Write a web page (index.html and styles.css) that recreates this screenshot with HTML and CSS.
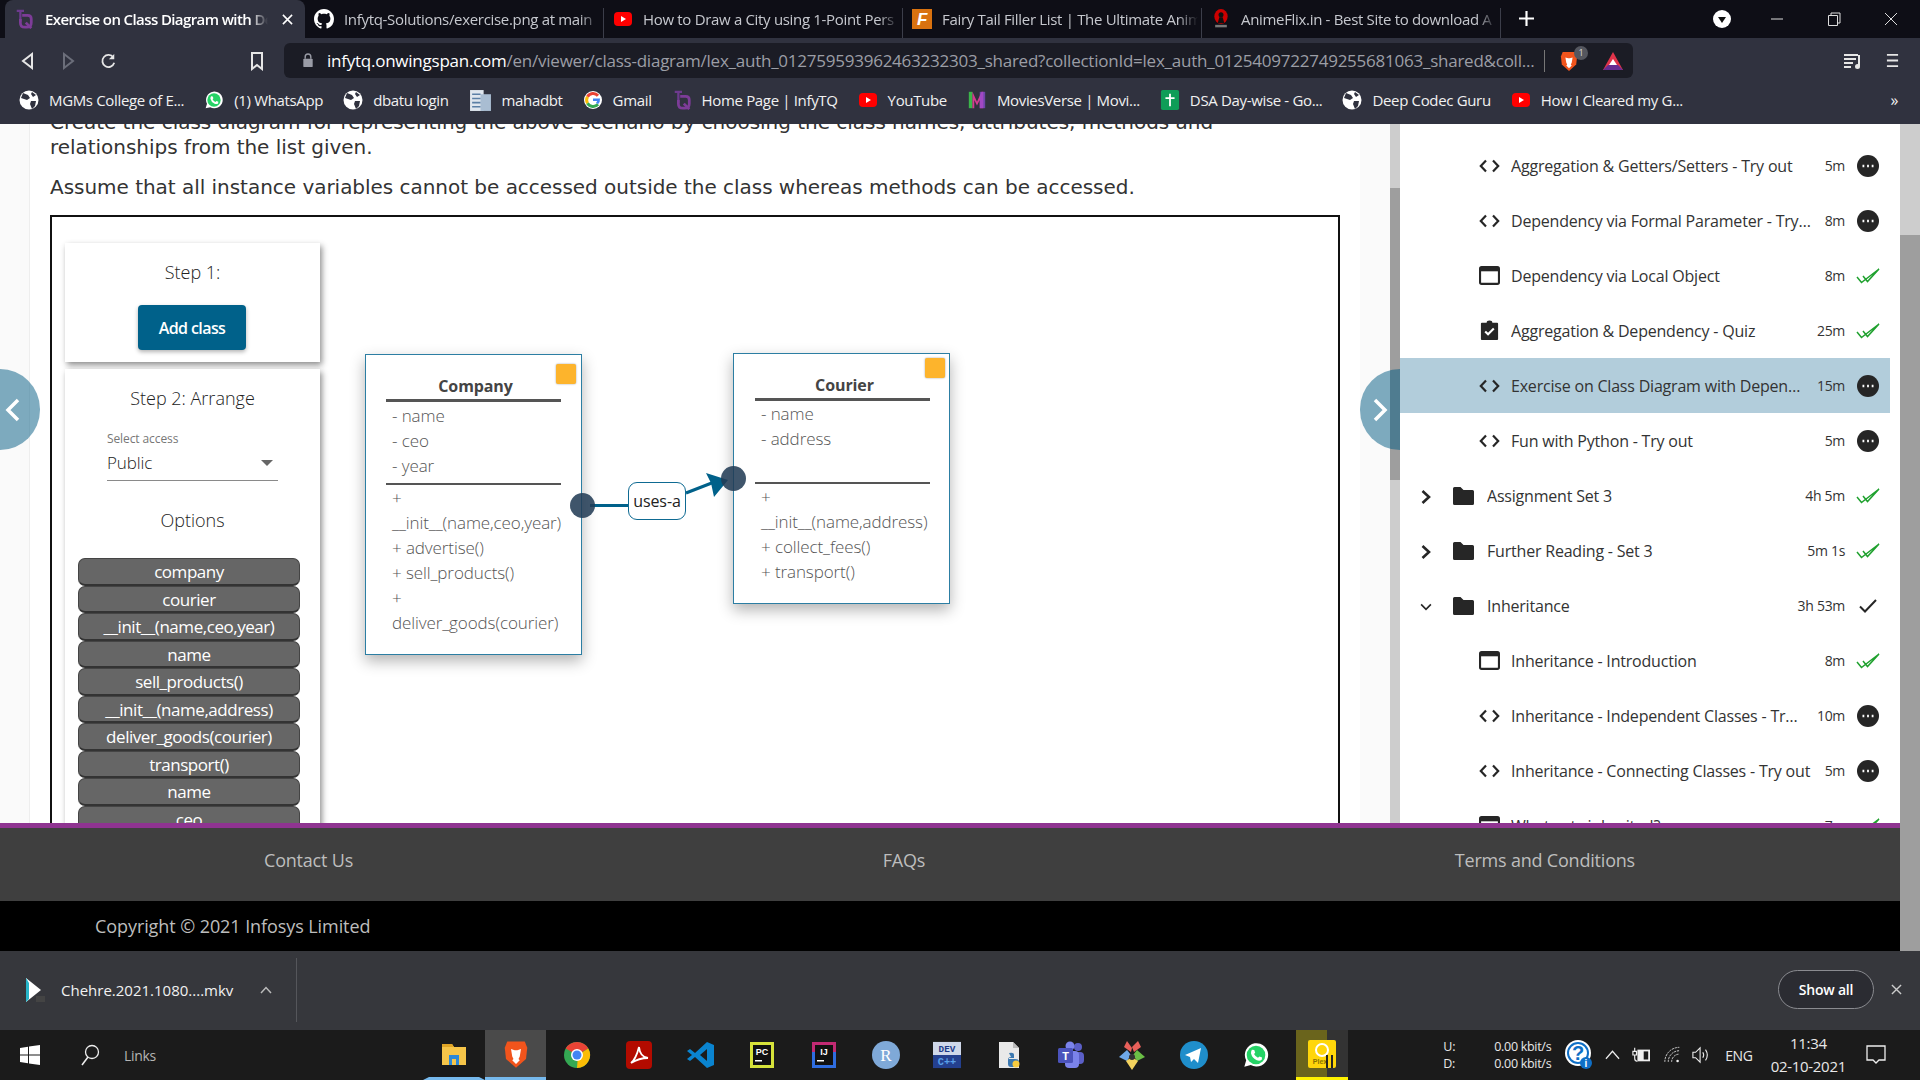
FILE: index.html
```html
<!DOCTYPE html>
<html lang="en">
<head>
  <meta charset="UTF-8" />
  <title>Exercise on Class Diagram with Dependency</title>
  <link rel="stylesheet" href="styles.css">
</head>
<body>
  <svg class="defs">
    <symbol id="yt" viewBox="0 0 20 20"><rect x="1" y="3" width="18" height="14" rx="4" fill="#f00"/><path d="M8 7l5 3-5 3z" fill="#fff"/></symbol>
    <symbol id="tq" viewBox="0 0 20 22"><path d="M2 2h8M6 2v12" fill="none" stroke="#6d3a8e" stroke-width="2.500"/><path d="M8 7h6q4 0 4 4v4q0 5-5 5h-2q-5 0-5-5v-4" fill="none" stroke="#7d3c98" stroke-width="3"/><path d="M12 15l6 6" stroke="#7d3c98" stroke-width="3"/></symbol>
    <symbol id="github" viewBox="0 0 16 16"><path fill="#fff" d="M8 0C3.58 0 0 3.58 0 8c0 3.54 2.29 6.53 5.47 7.59.4.07.55-.17.55-.38 0-.19-.01-.82-.01-1.49-2.01.37-2.53-.49-2.69-.94-.09-.23-.48-.94-.82-1.13-.28-.15-.68-.52-.01-.53.63-.01 1.08.58 1.23.82.72 1.21 1.87.87 2.33.66.07-.52.28-.87.51-1.07-1.78-.2-3.64-.89-3.64-3.95 0-.87.31-1.59.82-2.15-.08-.2-.36-1.02.08-2.12 0 0 .67-.21 2.2.82.64-.18 1.32-.27 2-.27.68 0 1.36.09 2 .27 1.53-1.04 2.2-.82 2.2-.82.44 1.1.16 1.92.08 2.12.51.56.82 1.27.82 2.15 0 3.07-1.87 3.75-3.65 3.95.29.25.54.73.54 1.48 0 1.07-.01 1.93-.01 2.2 0 .21.15.46.55.38A8.013 8.013 0 0016 8c0-4.42-3.58-8-8-8z"/></symbol>
    <symbol id="fairy" viewBox="0 0 20 20"><rect width="20" height="20" fill="#d9720f"/><text x="10" y="16" text-anchor="middle" font-family="Liberation Sans" font-weight="700" font-style="italic" font-size="17" fill="#fff">F</text></symbol>
    <symbol id="anime" viewBox="0 0 20 24"><ellipse cx="10" cy="9" rx="8" ry="9" fill="#c00"/><circle cx="10" cy="7" r="3" fill="#111"/><path d="M6 17l2-7h4l2 7z" fill="#111"/><rect x="3" y="19" width="14" height="3" fill="#777"/></symbol>
    <symbol id="globe" viewBox="0 0 20 20"><circle cx="10" cy="10" r="9.500" fill="#fff"/><path d="M4 3l5 2 2 3-3 2-3-1-3-1zM12 11l5 0-1 5-3 3-2-5zM13 2l4 3-3 2-2-3z" fill="#30323f"/></symbol>
    <symbol id="wa" viewBox="0 0 24 24"><path d="M2 22l1.600-5.400A10 10 0 1 1 7.500 20.600z" fill="#fff"/><circle cx="12" cy="12" r="8" fill="#25d366"/><path d="M8.500 7.500l2 .2.8 2.300-1 1.200q1.200 2.300 3.400 3.200l1.300-1.200 2.200 1-.3 1.900q-1.800 1.400-4.200.4-4-1.700-5-6 0-2 .8-3z" fill="#fff"/></symbol>
    <symbol id="doc" viewBox="0 0 22 22"><rect x="1" y="1" width="13" height="20" fill="#dfe6ee"/><rect x="11" y="5" width="10" height="16" fill="#a9bdd2"/><path d="M3 5h8M3 9h8M3 13h8M3 17h8" stroke="#5b7fa5" stroke-width="1.500"/></symbol>
    <symbol id="google" viewBox="0 0 20 20"><circle cx="10" cy="10" r="9" fill="#fff"/><path d="M4.500 6.800A6.500 6.500 0 0 1 15 5.800" fill="none" stroke="#ea4335" stroke-width="3"/><path d="M4.500 6.800a6.500 6.500 0 0 0 0 6.400" fill="none" stroke="#fbbc05" stroke-width="3"/><path d="M4.500 13.200A6.500 6.500 0 0 0 15 14.200" fill="none" stroke="#34a853" stroke-width="3"/><path d="M10 8.500h7q.4 3.500-2 5.700l-2-1.700q1-.8 1.200-1.500H10z" fill="#4285f4"/></symbol>
    <symbol id="movies" viewBox="0 0 22 22"><path d="M2 20V2h4v18z" fill="#3bb54a"/><path d="M6 2l5 11 5-11h2v18h-4V11l-3 6-3-6v9H6z" fill="#d63a8f"/><path d="M14 2h6v18h-6z" fill="#8a4ed8" opacity=".7"/></symbol>
    <symbol id="sheet" viewBox="0 0 20 22"><rect width="20" height="22" rx="2" fill="#0f9d58"/><path d="M9 4h2v14H9zM5 8h10v2H5z" fill="#fff"/></symbol>
    <symbol id="brave" viewBox="0 0 20 24"><path d="M3 2h14l2 5-1 9-8 7-8-7-1-9z" fill="#f1541c"/><path d="M6 8l3 1h2l3-1-1 6-1 2 1 1-3 3-3-3 1-1-1-2z" fill="#fff"/></symbol>
    <symbol id="code" viewBox="0 0 21 14"><path d="M7 1.500L1.800 7 7 12.500M14 1.500L19.200 7 14 12.500" fill="none" stroke="#262626" stroke-width="2.200"/></symbol>
    <symbol id="window" viewBox="0 0 20 20"><rect x="1" y="2" width="18" height="16" rx="1.500" fill="none" stroke="#262626" stroke-width="2"/><rect x="1" y="2" width="18" height="4" fill="#262626"/></symbol>
    <symbol id="quiz" viewBox="0 0 20 22"><path d="M2 3h5q0-2.500 3-2.500T13 3h5q1 0 1 1v16q0 1-1 1H2q-1 0-1-1V4q0-1 1-1z" fill="#262626"/><path d="M5.500 12l3 3 6-6" fill="none" stroke="#fff" stroke-width="2.200"/></symbol>
    <symbol id="folder" viewBox="0 0 21 18"><path d="M1.500 0h6l3 3h9q1.500 0 1.500 1.500v12q0 1.500-1.500 1.500h-18Q0 18 0 16.500v-15Q0 0 1.500 0z" fill="#262626"/></symbol>
    <symbol id="dots" viewBox="0 0 22 22"><circle cx="11" cy="11" r="11" fill="#262626"/><path d="M5.500 11h1.800M10.100 11h1.800M14.700 11h1.800" stroke="#fff" stroke-width="2.600"/></symbol>
    <symbol id="done" viewBox="0 0 24 16"><path d="M1 9l4.500 5.500L23 1M7 8l4.500 5.500L23 1" fill="none" stroke="#1fa12e" stroke-width="1.500"/></symbol>
    <symbol id="check" viewBox="0 0 18 14"><path d="M1 7.500l5 5L17 1" fill="none" stroke="#262626" stroke-width="2"/></symbol>
    <symbol id="chev-r" viewBox="0 0 12 16"><path d="M2.500 2l6.500 6-6.500 6" fill="none" stroke="#262626" stroke-width="2.600"/></symbol>
    <symbol id="chev-d" viewBox="0 0 16 12"><path d="M1.500 2.500l6.500 6.500 6.500-6.500" fill="none" stroke="#262626" stroke-width="2.200"/></symbol>
  </svg>

  <div class="tabstrip">
    <div class="tab tab-active"><svg class="fav"><use href="#tq"/></svg><span class="tab-title">Exercise on Class Diagram with De</span><svg class="tab-x" viewBox="0 0 12 12"><path d="M1 1l10 10M11 1L1 11" stroke="#fff" stroke-width="1.700"/></svg></div>
    <div class="tab"><svg class="fav"><use href="#github"/></svg><span class="tab-title">Infytq-Solutions/exercise.png at main</span></div>
    <div class="tab"><svg class="fav"><use href="#yt"/></svg><span class="tab-title">How to Draw a City using 1-Point Pers</span></div>
    <div class="tab"><svg class="fav"><use href="#fairy"/></svg><span class="tab-title">Fairy Tail Filler List | The Ultimate Anim</span></div>
    <div class="tab"><svg class="fav"><use href="#anime"/></svg><span class="tab-title">AnimeFlix.in - Best Site to download A</span></div>
    <svg class="tab-plus" viewBox="0 0 14 14"><path d="M7 0v14M0 7h14" stroke="#fff" stroke-width="2"/></svg>
    <div class="win-ctrls">
      <svg class="win-profile" viewBox="0 0 18 18"><circle cx="9" cy="9" r="9" fill="#fff"/><path d="M5 7h8l-4 6z" fill="#111"/></svg>
      <svg class="win-btn" viewBox="0 0 14 14"><path d="M1 7h12" stroke="#ddd"/></svg>
      <svg class="win-btn" viewBox="0 0 14 14"><path d="M1.500 3.500h9v10h-9zM4 3.500V1h9v10h-2.500" fill="none" stroke="#ddd"/></svg>
      <svg class="win-btn" viewBox="0 0 14 14"><path d="M1 1l12 12M13 1L1 13" stroke="#ddd"/></svg>
    </div>
  </div>

  <div class="toolbar">
    <svg class="nav-btn" viewBox="0 0 16 20"><path d="M12 3v14L3 10z" fill="none" stroke="#e6e6e6" stroke-width="2"/></svg>
    <svg class="nav-btn" viewBox="0 0 16 20"><path d="M4 3v14l9-7z" fill="none" stroke="#6b6e7a" stroke-width="2"/></svg>
    <svg class="nav-btn" viewBox="0 0 18 20"><path d="M15 6a6.800 6.800 0 1 0 1 6" fill="none" stroke="#e6e6e6" stroke-width="2"/><path d="M16 2v6h-6z" fill="#e6e6e6"/></svg>
    <svg class="nav-mark" viewBox="0 0 14 20"><path d="M2 2h10v16l-5-4-5 4z" fill="none" stroke="#e6e6e6" stroke-width="2"/></svg>
    <div class="omnibox">
      <svg class="lock" viewBox="0 0 12 16"><rect x="1" y="6" width="10" height="9" rx="1" fill="#9a9ca6"/><path d="M3 6V4q0-3 3-3t3 3v2" fill="none" stroke="#9a9ca6" stroke-width="1.500"/></svg>
      <div class="url"><span class="url-host">infytq.onwingspan.com</span>/en/viewer/class-diagram/lex_auth_012759593962463232303_shared?collectionId=lex_auth_0125409722749255681063_shared&amp;coll...</div>
      <span class="omni-sep"></span>
      <span class="shield"><svg class="shield-icon"><use href="#brave"/></svg><span class="shield-badge">1</span></span>
      <svg class="bat" viewBox="0 0 22 20"><path d="M11 1l10 18H1z" fill="#e0344a"/><path d="M1 19l5-5h10l5 5z" fill="#662d91"/><path d="M11 8l4 6H7z" fill="#fff"/></svg>
    </div>
    <svg class="tool-queue" viewBox="0 0 20 18"><path d="M1 3h14M1 7h12M1 11h9M1 15h7" stroke="#e6e6e6" stroke-width="2"/><path d="M16 3v11" stroke="#e6e6e6" stroke-width="2"/><circle cx="14.500" cy="14.500" r="2.500" fill="#e6e6e6"/></svg>
    <svg class="tool-menu" viewBox="0 0 14 16"><path d="M1 2h12M1 8h12M1 14h12" stroke="#e6e6e6" stroke-width="2"/></svg>
  </div>

  <div class="bookmarks">
    <a class="mark"><svg><use href="#globe"/></svg>MGMs College of E...</a>
    <a class="mark"><svg><use href="#wa"/></svg>(1) WhatsApp</a>
    <a class="mark"><svg><use href="#globe"/></svg>dbatu login</a>
    <a class="mark mark-doc"><svg><use href="#doc"/></svg>mahadbt</a>
    <a class="mark"><svg><use href="#google"/></svg>Gmail</a>
    <a class="mark"><svg><use href="#tq"/></svg>Home Page | InfyTQ</a>
    <a class="mark"><svg><use href="#yt"/></svg>YouTube</a>
    <a class="mark"><svg><use href="#movies"/></svg>MoviesVerse | Movi...</a>
    <a class="mark"><svg><use href="#sheet"/></svg>DSA Day-wise - Go...</a>
    <a class="mark"><svg><use href="#globe"/></svg>Deep Codec Guru</a>
    <a class="mark"><svg><use href="#yt"/></svg>How I Cleared my G...</a>
    <span class="mark-more">»</span>
  </div>

  <div class="page">
    <div class="page-main">
      <div class="viewer">
        <div class="gutter"></div>
        <div class="article">
          <p class="lead">Create the class diagram for representing the above scenario by choosing the class names, attributes, methods and relationships from the list given.</p>
          <p class="lead lead-2">Assume that all instance variables cannot be accessed outside the class whereas methods can be accessed.</p>
          <div class="diagram">
            <div class="panel panel-step1">
              <div class="panel-title">Step 1:</div>
              <button class="add-btn">Add class</button>
            </div>
            <div class="panel panel-step2">
              <div class="panel-title">Step 2: Arrange</div>
              <div class="select-label">Select access</div>
              <div class="select-box">Public<span class="select-caret"></span></div>
              <div class="panel-title options-title">Options</div>
              <div class="option">company</div>
              <div class="option">courier</div>
              <div class="option">__init__(name,ceo,year)</div>
              <div class="option">name</div>
              <div class="option">sell_products()</div>
              <div class="option">__init__(name,address)</div>
              <div class="option">deliver_goods(courier)</div>
              <div class="option">transport()</div>
              <div class="option">name</div>
              <div class="option">ceo</div>
            </div>

            <div class="uml uml-company">
              <span class="uml-flag"></span>
              <div class="uml-name">Company</div>
              <div class="uml-attrs"><div>- name</div><div>- ceo</div><div>- year</div></div>
              <div class="uml-methods"><div>+ __init__(name,ceo,year)</div><div>+ advertise()</div><div>+ sell_products()</div><div>+ deliver_goods(courier)</div></div>
            </div>
            <div class="uml uml-courier">
              <span class="uml-flag"></span>
              <div class="uml-name">Courier</div>
              <div class="uml-attrs"><div>- name</div><div>- address</div></div>
              <div class="uml-methods"><div>+ __init__(name,address)</div><div>+ collect_fees()</div><div>+ transport()</div></div>
            </div>

            <svg class="links" viewBox="0 0 1288 700">
              <path d="M538 288.500h38M634 276l27-10.500" fill="none" stroke="#00618a" stroke-width="3"/>
              <path d="M654 256l22 7-14 17-3-14z" fill="#00618a"/>
              <ellipse cx="530.500" cy="288.500" rx="12.500" ry="12.500" fill="#233c55" opacity=".87"/>
              <ellipse cx="681.500" cy="261.500" rx="12.500" ry="12.500" fill="#233c55" opacity=".87"/>
            </svg>
            <div class="link-label">uses-a</div>
          </div>
        </div>
        <div class="gutter-right"></div>
        <div class="sidebar-scroll"><span class="sidebar-thumb"></span></div>
        <div class="sidebar">
          <div class="row"><svg class="row-icon row-code"><use href="#code"/></svg><span class="row-title">Aggregation &amp; Getters/Setters - Try out</span><span class="row-time">5m</span><svg class="row-status"><use href="#dots"/></svg></div>
          <div class="row"><svg class="row-icon row-code"><use href="#code"/></svg><span class="row-title">Dependency via Formal Parameter - Try out</span><span class="row-time">8m</span><svg class="row-status"><use href="#dots"/></svg></div>
          <div class="row"><svg class="row-icon"><use href="#window"/></svg><span class="row-title">Dependency via Local Object</span><span class="row-time">8m</span><svg class="row-status row-done"><use href="#done"/></svg></div>
          <div class="row"><svg class="row-icon"><use href="#quiz"/></svg><span class="row-title">Aggregation &amp; Dependency - Quiz</span><span class="row-time">25m</span><svg class="row-status row-done"><use href="#done"/></svg></div>
          <div class="row row-active"><svg class="row-icon row-code"><use href="#code"/></svg><span class="row-title">Exercise on Class Diagram with Dependency</span><span class="row-time">15m</span><svg class="row-status"><use href="#dots"/></svg></div>
          <div class="row"><svg class="row-icon row-code"><use href="#code"/></svg><span class="row-title">Fun with Python - Try out</span><span class="row-time">5m</span><svg class="row-status"><use href="#dots"/></svg></div>
          <div class="row row-folder"><svg class="row-chev"><use href="#chev-r"/></svg><svg class="row-icon"><use href="#folder"/></svg><span class="row-title">Assignment Set 3</span><span class="row-time">4h 5m</span><svg class="row-status row-done"><use href="#done"/></svg></div>
          <div class="row row-folder"><svg class="row-chev"><use href="#chev-r"/></svg><svg class="row-icon"><use href="#folder"/></svg><span class="row-title">Further Reading - Set 3</span><span class="row-time">5m 1s</span><svg class="row-status row-done"><use href="#done"/></svg></div>
          <div class="row row-folder"><svg class="row-chev"><use href="#chev-d"/></svg><svg class="row-icon"><use href="#folder"/></svg><span class="row-title">Inheritance</span><span class="row-time">3h 53m</span><svg class="row-status row-check"><use href="#check"/></svg></div>
          <div class="row"><svg class="row-icon"><use href="#window"/></svg><span class="row-title">Inheritance - Introduction</span><span class="row-time">8m</span><svg class="row-status row-done"><use href="#done"/></svg></div>
          <div class="row"><svg class="row-icon row-code"><use href="#code"/></svg><span class="row-title">Inheritance - Independent Classes - Try out</span><span class="row-time">10m</span><svg class="row-status"><use href="#dots"/></svg></div>
          <div class="row"><svg class="row-icon row-code"><use href="#code"/></svg><span class="row-title">Inheritance - Connecting Classes - Try out</span><span class="row-time">5m</span><svg class="row-status"><use href="#dots"/></svg></div>
          <div class="row"><svg class="row-icon"><use href="#window"/></svg><span class="row-title">What gets inherited?</span><span class="row-time">7m</span><svg class="row-status row-done"><use href="#done"/></svg></div>
        </div>
        <div class="flip flip-left"><svg viewBox="0 0 16 24"><path d="M13 2L3 12l10 10" fill="none" stroke="#fff" stroke-width="3.500"/></svg></div>
        <div class="flip flip-right"><svg viewBox="0 0 16 24"><path d="M3 2l10 10L3 22" fill="none" stroke="#fff" stroke-width="3.500"/></svg></div>
      </div>
      <div class="foot-links"><a>Contact Us</a><a>FAQs</a><a>Terms and Conditions</a></div>
      <div class="foot-copy">Copyright © 2021 Infosys Limited</div>
    </div>
    <div class="page-scroll"></div>
  </div>

  <div class="downloads">
    <svg class="dl-icon" viewBox="0 0 20 26"><path d="M1 1l15 12L1 25z" fill="#fff"/><path d="M1 1v24l3-3V6z" fill="#27b5c9"/><rect x="11" y="19" width="9" height="6" fill="#444"/></svg>
    <span class="dl-name">Chehre.2021.1080....mkv</span>
    <svg class="dl-caret" viewBox="0 0 12 8"><path d="M1 7l5-5.500L11 7" fill="none" stroke="#bbb" stroke-width="1.500"/></svg>
    <span class="dl-sep"></span>
    <button class="dl-all">Show all</button>
    <svg class="dl-close" viewBox="0 0 12 12"><path d="M1 1l10 10M11 1L1 11" stroke="#ccc" stroke-width="1.500"/></svg>
  </div>

  <div class="taskbar">
    <svg class="start" viewBox="0 0 20 20"><path d="M0 3l8-1.200V9.500H0zM9 1.600L20 0v9.500H9zM0 10.500h8v7.700L0 17zM9 10.500h11V20L9 18.400z" fill="#fff"/></svg>
    <svg class="search" viewBox="0 0 20 22"><circle cx="12" cy="8" r="6.500" fill="none" stroke="#eee" stroke-width="1.300"/><path d="M8 13l-6 8" stroke="#eee" stroke-width="1.500"/></svg>
    <span class="search-text">Links</span>
    <div class="apps">
      <div class="app app-open"><svg viewBox="0 0 28 28"><path d="M2 4h10l2 3h12v18H2z" fill="#f6c549"/><path d="M2 4h10l2 3H2z" fill="#e0a526"/><rect x="9" y="15" width="10" height="10" fill="#2b88d8"/><rect x="12" y="19" width="4" height="6" fill="#f6c549"/></svg></div>
      <div class="app app-active"><svg><use href="#brave"/></svg></div>
      <div class="app"><svg viewBox="0 0 28 28"><circle cx="14" cy="14" r="13" fill="#34a853"/><path d="M14 1a13 13 0 0 1 11.300 6.500L14 14 2.700 7.500A13 13 0 0 1 14 1z" fill="#ea4335"/><path d="M25.300 7.500A13 13 0 0 1 14 27l1-13z" fill="#fbbc05"/><circle cx="14" cy="14" r="6" fill="#fff"/><circle cx="14" cy="14" r="4.500" fill="#4285f4"/></svg></div>
      <div class="app"><svg viewBox="0 0 28 28"><rect x="1" y="0" width="26" height="28" rx="4" fill="#b30b00"/><path d="M6 22q5-4 8-16 1 10 9 11-9 0-17 5z" fill="none" stroke="#fff" stroke-width="1.800"/></svg></div>
      <div class="app"><svg viewBox="0 0 28 28"><path d="M20 1l7 3v20l-7 3L8 16l-5 4-3-2 5-4-5-4 3-2 5 4z" fill="#0a84d0"/><path d="M20 8l-7 6 7 6z" fill="#1c1c1c"/></svg></div>
      <div class="app"><svg viewBox="0 0 28 28"><rect x="2" y="1" width="24" height="26" fill="#d6e23a"/><rect x="5" y="4" width="18" height="20" fill="#111"/><text x="14" y="14" text-anchor="middle" font-family="Liberation Sans" font-weight="700" font-size="9" fill="#fff">PC</text><rect x="7" y="19" width="7" height="1.500" fill="#fff"/></svg></div>
      <div class="app"><svg viewBox="0 0 28 28"><rect x="2" y="1" width="24" height="26" fill="#2f6de0"/><rect x="2" y="1" width="24" height="10" fill="#c22a73"/><rect x="5" y="4" width="18" height="20" fill="#111"/><text x="14" y="14" text-anchor="middle" font-family="Liberation Sans" font-weight="700" font-size="9" fill="#fff">IJ</text><rect x="7" y="19" width="7" height="1.500" fill="#fff"/></svg></div>
      <div class="app"><svg viewBox="0 0 28 28"><circle cx="14" cy="14" r="14" fill="#7fa9d8"/><text x="14" y="20" text-anchor="middle" font-family="Liberation Serif" font-size="17" fill="#fff">R</text></svg></div>
      <div class="app"><svg viewBox="0 0 30 28"><rect width="30" height="14" fill="#cfd8ea"/><rect y="14" width="30" height="14" fill="#24408f"/><text x="15" y="11" text-anchor="middle" font-family="Liberation Mono" font-weight="700" font-size="10" fill="#1c3a88">DEV</text><text x="15" y="25" text-anchor="middle" font-family="Liberation Mono" font-weight="700" font-size="11" fill="#5aa0e8">C++</text></svg></div>
      <div class="app"><svg viewBox="0 0 28 28"><path d="M4 1h14l6 6v20H4z" fill="#e9e9e9"/><path d="M18 1v6h6" fill="#bbb"/><path d="M14 12q5-1 5 2v3h-5v1h6q4 0 4 3t-4 5h-4q-3 0-3-3v-4q0-3 3-3z" fill="#3b78b0"/><circle cx="21" cy="23" r="3.500" fill="#f7cb3f"/></svg></div>
      <div class="app"><svg viewBox="0 0 28 28"><circle cx="21" cy="6" r="4" fill="#5b5fc7"/><rect x="14" y="11" width="13" height="12" rx="4" fill="#5b5fc7"/><circle cx="13" cy="5" r="4.500" fill="#7b83eb"/><rect x="8" y="10" width="14" height="17" rx="4" fill="#7b83eb"/><rect x="1" y="7" width="15" height="15" rx="1.500" fill="#4b53bc"/><text x="8.500" y="19" text-anchor="middle" font-family="Liberation Sans" font-weight="700" font-size="11" fill="#fff">T</text></svg></div>
      <div class="app"><svg viewBox="0 0 28 30"><path d="M14 7l6-6 3 6-7 5z" fill="#e8605a"/><path d="M14 8L9 1 6 7l7 5z" fill="#e8605a"/><path d="M9 10L1 17l8 4 4-6z" fill="#6fa8e8"/><path d="M19 10l8 7-8 4-4-6z" fill="#6bbf46"/><path d="M8 21l6 9 6-9-6-4z" fill="#f4d35e"/><circle cx="14" cy="17" r="3" fill="#333"/></svg></div>
      <div class="app"><svg viewBox="0 0 28 28"><circle cx="14" cy="14" r="14" fill="#1f8ecb"/><path d="M5 14l16-7-3 15-4-4-3 3-1-5z" fill="#fff"/></svg></div>
      <div class="app"><svg><use href="#wa"/></svg></div>
      <div class="app app-plex"><svg viewBox="0 0 28 30"><rect y="1" width="28" height="28" rx="2" fill="#ffd60a"/><circle cx="14" cy="11" r="6" fill="none" stroke="#fff" stroke-width="2"/><text x="12" y="25" text-anchor="middle" font-family="Liberation Sans" font-weight="700" font-size="7" fill="#8a7400">Plex</text><path d="M19 16v13M24 16v13" stroke="#222" stroke-width="2"/></svg></div>
    </div>
    <div class="tray">
      <div class="net"><div class="net-row"><span>U:</span><span>0.00 kbit/s</span></div><div class="net-row"><span>D:</span><span>0.00 kbit/s</span></div></div>
      <svg class="tray-help" viewBox="0 0 28 32"><circle cx="14" cy="14" r="13" fill="#fff"/><circle cx="14" cy="14" r="10" fill="none" stroke="#0f6fc6" stroke-width="2"/><text x="14" y="21" text-anchor="middle" font-family="Liberation Sans" font-weight="700" font-size="20" fill="#0f6fc6">?</text><circle cx="22" cy="24" r="6" fill="#0f6fc6"/><text x="22" y="28" text-anchor="middle" font-family="Liberation Sans" font-weight="700" font-size="10" fill="#fff">i</text></svg>
      <svg class="tray-caret" viewBox="0 0 16 10"><path d="M1 9l7-8 7 8" fill="none" stroke="#eee" stroke-width="1.300"/></svg>
      <svg class="tray-power" viewBox="0 0 22 20"><path d="M4 2v4M2 6h4v4H2zM4 10v4q0 3 3 3" fill="none" stroke="#eee" stroke-width="1.300"/><rect x="7" y="4" width="14" height="13" fill="#eee"/><rect x="14" y="6" width="5" height="9" fill="#1b1b1b"/></svg>
      <svg class="tray-wifi" viewBox="0 0 20 20"><path d="M1 18A17 17 0 0 1 18 1M5 18A13 13 0 0 1 18 5M9 18a9 9 0 0 1 9-9" fill="none" stroke="#eee" stroke-width="1" stroke-dasharray="2.500 1"/><circle cx="16" cy="17" r="1.500" fill="#eee"/></svg>
      <svg class="tray-sound" viewBox="0 0 22 20"><path d="M2 7h3l5-5v16l-5-5H2z" fill="none" stroke="#eee" stroke-width="1.200"/><path d="M13 7q2 3 0 6M16 4q4 6 0 12" fill="none" stroke="#eee" stroke-width="1.200"/></svg>
      <span class="tray-lang">ENG</span>
      <div class="clock"><div>11:34</div><div>02-10-2021</div></div>
      <svg class="tray-note" viewBox="0 0 20 20"><path d="M1 1h18v14h-6l-3 3-3-3H1z" fill="none" stroke="#eee" stroke-width="1.300"/></svg>
    </div>
  </div>
</body>
</html>
```

FILE: styles.css
```css
* {
  box-sizing: border-box;
}

body {
  margin: 0;
  width: 1920px;
  height: 1080px;
  overflow: hidden;
  display: flex;
  flex-direction: column;
  font-family: "Open Sans", sans-serif;
  background: #fff;
}

.defs {
  display: none;
}

/* browser chrome */
.tabstrip {
  height: 38px;
  display: flex;
  align-items: stretch;
  padding-left: 5px;
  background: #0e0e16;
  color: #c6c8ce;
  font-size: 15px;
  letter-spacing: -0.32px;
}

.tab {
  width: 299px;
  display: flex;
  align-items: center;
  gap: 10px;
  margin-top: 8px;
  padding: 0 3px 8px 9px;
  border-right: 1px solid #3c3e4a;
}

.tab-active {
  width: 300px;
  margin: 0;
  padding-bottom: 0;
  background: #30323f;
  color: #fff;
  font-weight: 600;
  letter-spacing: -0.6px;
  gap: 11px;
  border-right: 0;
  border-radius: 8px 8px 0 0;
}

.fav {
  width: 20px;
  height: 20px;
  flex: none;
}

.tab-title {
  flex: 1;
  overflow: hidden;
  white-space: nowrap;
  -webkit-mask-image: linear-gradient(to right, #000 92%, transparent);
  mask-image: linear-gradient(to right, #000 92%, transparent);
}

.tab-x {
  width: 11px;
  height: 11px;
  flex: none;
  margin: 0 9px 0 3px;
}

.tab-plus {
  width: 15px;
  height: 15px;
  margin: 11px 0 0 18px;
}

.win-ctrls {
  margin-left: auto;
  display: flex;
  align-items: center;
}

.win-profile {
  width: 18px;
  height: 18px;
  margin-right: 39px;
}

.win-btn {
  width: 14px;
  height: 14px;
  margin-right: 43px;
}

.win-btn:last-child {
  margin-right: 22px;
}

.toolbar {
  height: 46px;
  display: flex;
  align-items: center;
  padding: 0 0 1px 20px;
  background: #30323f;
}

.nav-btn {
  width: 16px;
  height: 20px;
  margin-right: 24px;
}

.nav-mark {
  width: 14px;
  height: 20px;
  margin: 0 20px 0 110px;
}

.omnibox {
  width: 1349px;
  height: 35px;
  display: flex;
  align-items: center;
  padding-left: 18px;
  background: #1b1c25;
  border-radius: 6px;
  font-size: 17px;
  letter-spacing: -0.24px;
  color: #9c9ea6;
}

.lock {
  width: 12px;
  height: 15px;
  flex: none;
  margin-right: 13px;
}

.url {
  width: 1209px;
  flex: none;
  white-space: nowrap;
  overflow: hidden;
}

.url-host {
  color: #fff;
}

.omni-sep {
  width: 1px;
  height: 22px;
  margin: 0 15px 0 8px;
  background: #777;
}

.shield {
  position: relative;
  width: 18px;
  height: 24px;
}

.shield-icon {
  width: 18px;
  height: 24px;
}

.shield-badge {
  position: absolute;
  left: 14px;
  top: -3px;
  width: 14px;
  height: 14px;
  border-radius: 50%;
  background: #55575f;
  color: #ddd;
  font-size: 9px;
  letter-spacing: 0;
  line-height: 14px;
  text-align: center;
}

.bat {
  width: 22px;
  height: 20px;
  margin-left: 24px;
}

.tool-queue {
  width: 20px;
  height: 18px;
  margin-left: 210px;
}

.tool-menu {
  width: 13px;
  height: 15px;
  margin-left: 23px;
}

.bookmarks {
  height: 40px;
  display: flex;
  align-items: center;
  gap: 20px;
  padding: 0 0 8px 19px;
  background: #30323f;
  color: #f1f1f1;
  font-size: 15px;
  letter-spacing: -0.34px;
}

.mark {
  display: flex;
  align-items: center;
  gap: 10px;
  white-space: nowrap;
}

.mark svg {
  width: 20px;
  height: 20px;
  flex: none;
}

.mark-doc svg {
  width: 23px;
  height: 23px;
}

.mark-more {
  margin-left: auto;
  margin-right: 22px;
  font-size: 16px;
}

/* page */
.page {
  flex: 1;
  min-height: 0;
  display: flex;
}

.page-main {
  width: 1900px;
  display: flex;
  flex-direction: column;
}

.page-scroll {
  width: 20px;
  background: linear-gradient(#cdcdcd 111px, #9e9e9e 111px);
}

.viewer {
  position: relative;
  height: 704px;
  display: flex;
  overflow: hidden;
  border-bottom: 5px solid #8f3491;
}

.gutter {
  width: 30px;
  flex: none;
  background: #fafafa;
  border-right: 1px solid #eee;
}

.article {
  width: 1330px;
  flex: none;
  padding-left: 20px;
  color: #333;
}

.lead {
  width: 1290px;
  margin: -14px 0 0;
  font-family: "DejaVu Sans", sans-serif;
  font-size: 20px;
  letter-spacing: -0.03px;
  line-height: 25px;
}

.lead-2 {
  margin-top: 15px;
}

.diagram {
  position: relative;
  width: 1290px;
  height: 700px;
  margin-top: 15px;
  padding: 26px 0 0 13px;
  border: 2px solid #111;
  font-size: 17px;
  letter-spacing: -0.1px;
}

.panel {
  width: 255px;
  background: #fff;
  text-align: center;
  box-shadow: 2px 3px 6px rgba(0, 0, 0, 0.45);
}

.panel-step1 {
  height: 119px;
  padding-top: 17px;
}

.panel-step2 {
  margin-top: 7px;
  height: 600px;
  padding-top: 17px;
}

.panel-title {
  font-size: 18px;
  font-weight: 300;
  line-height: 24px;
  color: #222;
  letter-spacing: 0;
}

.add-btn {
  display: block;
  width: 108px;
  height: 45px;
  margin: 21px 0 0 73px;
  border: 0;
  border-radius: 4px;
  background: #00618a;
  color: #fff;
  font: 600 16px "Open Sans", sans-serif;
  letter-spacing: -0.6px;
  box-shadow: 0 2px 4px rgba(0, 0, 0, 0.3);
}

.select-label {
  margin: 21px 0 0 42px;
  font-size: 12px;
  line-height: 16px;
  color: #777;
  text-align: left;
}

.select-box {
  position: relative;
  width: 171px;
  margin: 3px 0 0 42px;
  padding-bottom: 4px;
  border-bottom: 1px solid #8a8a8a;
  font-size: 17px;
  font-weight: 300;
  line-height: 26px;
  color: #222;
  text-align: left;
}

.select-caret {
  position: absolute;
  right: 5px;
  top: 10px;
  border-style: solid;
  border-width: 6px 6.5px 0;
  border-color: #666 transparent transparent;
}

.options-title {
  margin: 27px 0 26px;
}

.option {
  width: 222px;
  height: 27.5px;
  margin-left: 13px;
  background: #666;
  border: 1px solid #444;
  border-bottom: 2px solid #333;
  border-radius: 7px;
  color: #fff;
  font-size: 17px;
  line-height: 25px;
  letter-spacing: -0.45px;
}

.uml {
  position: absolute;
  width: 217px;
  padding: 0 14px 0 21px;
  background: #fff;
  border: 1px solid #2c7ea3;
  box-shadow: 0 6px 14px rgba(0, 0, 0, 0.3);
  color: #555;
  font-weight: 300;
  line-height: 25px;
}

.uml-company {
  left: 313px;
  top: 137px;
  height: 301px;
  padding-left: 20px;
}

.uml-courier {
  left: 681px;
  top: 136px;
  height: 251px;
}

.uml-flag {
  position: absolute;
  top: 9px;
  right: 5px;
  width: 20px;
  height: 20px;
  background: #fdb42c;
  border-radius: 2px;
  box-shadow: 0 0 2px rgba(0, 0, 0, 0.4);
}

.uml-courier .uml-flag {
  top: 4px;
  right: 4px;
}

.uml-name {
  margin: 19px 0 0;
  height: 28px;
  width: 175px;
  border-bottom: 3px solid #555;
  padding-left: 4px;
  color: #444;
  font-size: 16px;
  font-weight: 700;
  line-height: 24px;
  text-align: center;
}

.uml-attrs {
  width: 175px;
  height: 83px;
  padding: 1px 0 0 6px;
  border-bottom: 2px solid #555;
}

.uml-courier .uml-attrs {
  padding-top: 0;
}

.uml-methods {
  width: 170px;
  margin-left: 6px;
}

.links {
  position: absolute;
  left: 0;
  top: 0;
  width: 1288px;
  height: 700px;
  pointer-events: none;
}

.link-label {
  position: absolute;
  left: 576px;
  top: 265px;
  width: 58px;
  height: 38px;
  background: #fff;
  border: 1px solid #0e6a92;
  border-radius: 9px;
  color: #222;
  font-size: 16px;
  line-height: 36px;
  text-align: center;
}

.gutter-right {
  width: 30px;
  flex: none;
  background: #fafafa;
}

.sidebar-scroll {
  width: 10px;
  flex: none;
  padding-top: 64px;
  background: #cdcdcd;
}

.sidebar-thumb {
  display: block;
  height: 292px;
  background: #9e9e9e;
}

.sidebar {
  width: 500px;
  flex: none;
  padding-top: 14px;
  background: #fff;
  color: #333;
  font-size: 16px;
  letter-spacing: -0.2px;
}

.row {
  width: 490px;
  height: 55px;
  display: flex;
  align-items: center;
  padding: 0 11px 0 79px;
}

.row-folder {
  padding-left: 20px;
}

.row-active {
  background: #b2cddb;
}

.row-chev {
  width: 12px;
  height: 16px;
  flex: none;
  margin: 2px 21px 0 0;
}

.row-icon {
  width: 21px;
  height: 21px;
  flex: none;
  margin-right: 11px;
}

.row-folder .row-icon {
  margin-right: 13px;
  height: 18px;
}

.row-code {
  height: 14px;
}

.row-title {
  flex: 1;
  min-width: 0;
  overflow: hidden;
  white-space: nowrap;
  text-overflow: ellipsis;
}

.row-time {
  flex: none;
  margin: 0 12px;
  font-size: 14px;
  letter-spacing: -0.3px;
}

.row-status {
  width: 22px;
  height: 22px;
  flex: none;
}

.row-done {
  width: 24px;
  height: 16px;
  margin: 0 -1px;
}

.row-check {
  height: 14px;
}

.flip {
  position: absolute;
  top: 245px;
  width: 40px;
  height: 81px;
  display: flex;
  align-items: center;
  justify-content: center;
  background: rgba(0, 90, 130, 0.5);
}

.flip svg {
  width: 16px;
  height: 24px;
}

.flip-left {
  left: 0;
  border-radius: 0 41px 41px 0;
  padding-right: 15px;
}

.flip-right {
  left: 1360px;
  border-radius: 41px 0 0 41px;
}

/* footer */
.foot-links {
  height: 73px;
  display: flex;
  align-items: center;
  justify-content: space-between;
  padding: 0 265px 9px 264px;
  background: #3f3f3f;
  color: #bdbdbd;
  font-size: 18px;
  letter-spacing: -0.2px;
}

.foot-copy {
  height: 50px;
  padding-left: 95px;
  background: #000;
  color: #bdbdbd;
  font-size: 18px;
  line-height: 50px;
  letter-spacing: -0.08px;
}

/* download shelf */
.downloads {
  height: 79px;
  flex: none;
  display: flex;
  align-items: center;
  padding: 0 0 2px 25px;
  background: #36373c;
  color: #f1f1f1;
  font-size: 15px;
}

.dl-icon {
  width: 20px;
  height: 26px;
  margin-right: 16px;
}

.dl-name {
  width: 175px;
  white-space: nowrap;
}

.dl-caret {
  width: 12px;
  height: 8px;
  margin-left: 24px;
}

.dl-sep {
  width: 1px;
  height: 64px;
  margin-left: 24px;
  background: #55565b;
}

.dl-all {
  width: 96px;
  height: 39px;
  margin-left: auto;
  border: 1px solid #8a8b90;
  border-radius: 20px;
  background: #2b2c32;
  color: #fff;
  font: 600 14px "Open Sans", sans-serif;
  letter-spacing: -0.2px;
}

.dl-close {
  width: 11px;
  height: 11px;
  margin: 0 18px 0 17px;
}

/* windows taskbar */
.taskbar {
  height: 50px;
  flex: none;
  display: flex;
  align-items: center;
  padding-left: 20px;
  background: #1b1b1b;
  color: #e8e8e8;
  font-size: 14px;
}

.start {
  width: 20px;
  height: 20px;
}

.search {
  width: 20px;
  height: 22px;
  margin-left: 40px;
}

.search-text {
  width: 299px;
  margin-left: 24px;
  color: #b5b5b5;
  letter-spacing: -0.3px;
}

.apps {
  height: 50px;
  display: flex;
}

.app {
  width: 61.7px;
  height: 50px;
  display: flex;
  align-items: center;
  justify-content: center;
}

.app svg {
  width: 28px;
  height: 30px;
}

.app-open {
  border-bottom: 3px solid #76b9ed;
  border-left: 6px solid #1b1b1b;
  border-right: 6px solid #1b1b1b;
}

.app-active {
  background: #4a4a4a;
  border-bottom: 3px solid #76b9ed;
}

.app-plex {
  width: 52.7px;
  margin-left: 9px;
  background: linear-gradient(to right, #6a641c 60%, #333 60%);
  border-bottom: 3px solid #fff200;
}

.tray {
  display: flex;
  align-items: center;
  margin-left: 95px;
}

.net {
  width: 108px;
  font-size: 12.5px;
  line-height: 17px;
  letter-spacing: -0.3px;
}

.net-row {
  display: flex;
  justify-content: space-between;
}

.tray-help {
  width: 28px;
  height: 32px;
  margin-left: 13px;
}

.tray-caret {
  width: 15px;
  height: 10px;
  margin-left: 13px;
}

.tray-power {
  width: 20px;
  height: 18px;
  margin-left: 11px;
}

.tray-wifi {
  width: 17px;
  height: 18px;
  margin-left: 13px;
}

.tray-sound {
  width: 20px;
  height: 18px;
  margin-left: 10px;
}

.tray-lang {
  margin-left: 14px;
  width: 30px;
  letter-spacing: -0.5px;
}

.clock {
  width: 84px;
  margin-left: 11px;
  font-size: 15px;
  line-height: 23px;
  text-align: center;
  letter-spacing: -0.3px;
}

.tray-note {
  width: 20px;
  height: 20px;
  margin-left: 16px;
}
```
